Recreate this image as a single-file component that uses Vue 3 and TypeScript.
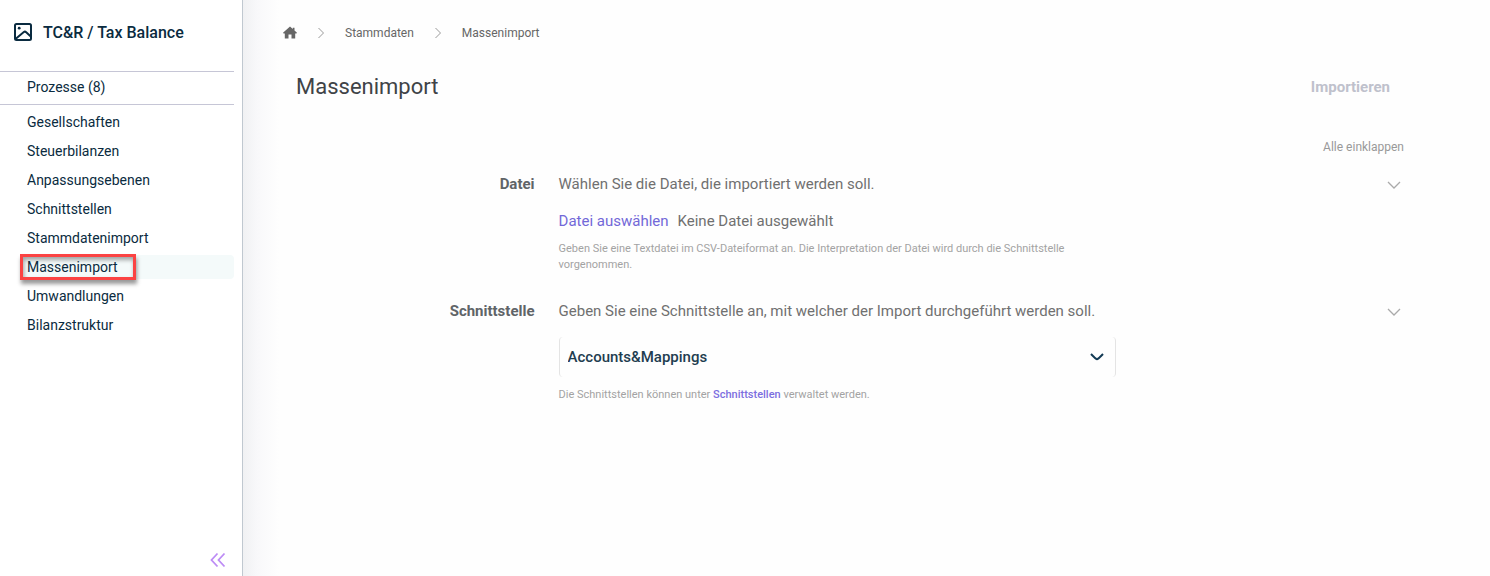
<script setup lang="ts">
import { ref } from 'vue'

interface NavItem {
  label: string
  active?: boolean
}

const items: NavItem[] = [
  { label: 'Gesellschaften' },
  { label: 'Steuerbilanzen' },
  { label: 'Anpassungsebenen' },
  { label: 'Schnittstellen' },
  { label: 'Stammdatenimport' },
  { label: 'Massenimport', active: true },
  { label: 'Umwandlungen' },
  { label: 'Bilanzstruktur' },
]

const fileName = ref('Keine Datei ausgewählt')
const selected = ref('Accounts&Mappings')

function onFile(event: Event): void {
  const input = event.target as HTMLInputElement
  fileName.value = input.files?.[0]?.name ?? 'Keine Datei ausgewählt'
}
</script>

<template>
  <div class="page">
    <aside class="sidebar">
      <header class="brand">
        <svg class="brand-icon" viewBox="0 0 20 20" fill="none" stroke="currentColor" stroke-width="2" aria-hidden="true">
          <rect x="2" y="2" width="16" height="16" rx="1.5" />
          <path d="M2.5 17 L10.8 10 Q12 9.2 13.2 10.2 L17.8 14.4" />
          <circle cx="6.2" cy="6.2" r="1.4" fill="currentColor" stroke="none" />
        </svg>
        <span>TC&amp;R / Tax Balance</span>
      </header>
      <nav class="nav">
        <div class="process"><a href="#">Prozesse (8)</a></div>
        <ul>
          <li v-for="item in items" :key="item.label" :class="{ active: item.active }">
            <a href="#" :aria-current="item.active ? 'page' : undefined">{{ item.label }}</a>
          </li>
        </ul>
      </nav>
      <button class="collapse" type="button" aria-label="Navigation einklappen">
        <svg viewBox="0 0 16 16" fill="none" stroke="currentColor" stroke-width="1.8" aria-hidden="true">
          <path d="M7.5 1.5 L1.5 8 L7.5 14.5 M14.5 1.5 L8.5 8 L14.5 14.5" />
        </svg>
      </button>
    </aside>

    <main class="main">
      <nav class="crumbs" aria-label="Brotkrumen">
        <a href="#" class="home" aria-label="Startseite">
          <svg viewBox="0 0 14 14" fill="currentColor" aria-hidden="true">
            <path d="M7 0.5 L9.8 3 V1.8 H11.5 V4.5 L14 6.8 L13.4 7.6 H12.2 V12.4 H8.5 V8.6 H5.5 V12.4 H1.8 V7.6 H0.6 L0 6.8 Z" />
          </svg>
        </a>
        <svg class="sep" viewBox="0 0 6 12" fill="none" stroke="currentColor" aria-hidden="true"><path d="M0.5 1 L5.5 6 L0.5 11" /></svg>
        <a href="#">Stammdaten</a>
        <svg class="sep" viewBox="0 0 6 12" fill="none" stroke="currentColor" aria-hidden="true"><path d="M0.5 1 L5.5 6 L0.5 11" /></svg>
        <a href="#">Massenimport</a>
      </nav>

      <div class="heading">
        <h1>Massenimport</h1>
        <button type="button" class="import" disabled>Importieren</button>
      </div>

      <div class="tools"><button type="button">Alle einklappen</button></div>

      <section class="row">
        <h2>Datei</h2>
        <div>
          <p class="lead">Wählen Sie die Datei, die importiert werden soll.</p>
          <div class="file">
            <input id="file" type="file" accept=".csv" @change="onFile" />
            <label for="file">Datei auswählen</label>
            <span>{{ fileName }}</span>
          </div>
          <p class="hint">Geben Sie eine Textdatei im CSV-Dateiformat an. Die Interpretation der Datei wird durch die Schnittstelle vorgenommen.</p>
        </div>
        <button type="button" class="toggle" aria-label="Datei einklappen">
          <svg viewBox="0 0 14 8" fill="none" stroke="currentColor" stroke-width="1.3" aria-hidden="true"><path d="M1 1 L7 7 L13 1" /></svg>
        </button>
      </section>

      <section class="row">
        <h2><label for="interface">Schnittstelle</label></h2>
        <div>
          <p class="lead">Geben Sie eine Schnittstelle an, mit welcher der Import durchgeführt werden soll.</p>
          <div class="select">
            <select id="interface" v-model="selected">
              <option>Accounts&amp;Mappings</option>
            </select>
            <svg viewBox="0 0 14 8" fill="none" stroke="currentColor" stroke-width="2" aria-hidden="true"><path d="M1 1 Q6 6.2 7 6.2 Q8 6.2 13 1" /></svg>
          </div>
          <p class="hint">Die Schnittstellen können unter <a href="#">Schnittstellen</a> verwaltet werden.</p>
        </div>
        <button type="button" class="toggle" aria-label="Schnittstelle einklappen">
          <svg viewBox="0 0 14 8" fill="none" stroke="currentColor" stroke-width="1.3" aria-hidden="true"><path d="M1 1 L7 7 L13 1" /></svg>
        </button>
      </section>
    </main>
  </div>
</template>

<style>
body {
  margin: 0;
}
</style>

<style scoped>
.page {
  display: flex;
  min-height: 100vh;
  font-family: Roboto, "Liberation Sans", sans-serif;
  background: #fefefe;
}

.page * {
  box-sizing: border-box;
}

a {
  color: inherit;
  text-decoration: none;
}

button {
  border: 0;
  padding: 0;
  background: none;
  font-family: inherit;
}

svg {
  display: block;
}

.sidebar {
  display: flex;
  flex-direction: column;
  flex: 0 0 243px;
  padding-right: 8px;
  border-right: 1px solid #c0c8d0;
  background: #fff;
  color: #0a2b40;
}

.brand {
  display: flex;
  align-items: center;
  gap: 10px;
  height: 71px;
  padding: 0 0 7px 13px;
  font-size: 16px;
  font-weight: 500;
}

.brand-icon {
  width: 20px;
  height: 20px;
}

.nav {
  font-size: 14px;
  line-height: 24px;
}

.process {
  padding: 3px 0 5px 27px;
  border-top: 1px solid #c6c6d6;
  border-bottom: 1px solid #c6c6d6;
}

ul {
  display: flex;
  flex-direction: column;
  gap: 5px;
  margin: 0;
  padding: 5px 0 0 20px;
  list-style: none;
}

li {
  display: flex;
  border-radius: 4px;
}

li a {
  padding-left: 7px;
}

li.active {
  background: #f4fafa;
}

li.active a {
  margin: -1px 0;
  padding: 0 15px 0 4px;
  border: 3px solid #fb4343;
  line-height: 20px;
  box-shadow: 1px 4px 4px rgba(0, 0, 0, 0.4), inset 1px 3px 4px rgba(0, 0, 0, 0.35);
}

.collapse {
  margin: auto 8px 8px auto;
  color: #bd8cf5;
}

.collapse svg {
  width: 16px;
  height: 16px;
}

.main {
  flex: 1;
  min-width: 0;
  padding: 24px 86px 24px 53px;
  background: linear-gradient(90deg, #f0f1f3 0, #f8f8fa 14px, #fefefe 36px);
}

.crumbs {
  display: flex;
  align-items: center;
  gap: 21px;
  height: 18px;
  margin-left: -13px;
  color: #666;
  font-size: 12px;
}

.home svg {
  width: 14px;
  height: 14px;
}

.sep {
  width: 6px;
  height: 12px;
  color: #999;
}

.heading {
  display: flex;
  align-items: center;
  justify-content: space-between;
  margin-top: 29px;
  padding-right: 14px;
}

h1 {
  margin: 0;
  color: #404347;
  font-size: 22px;
  font-weight: 400;
  line-height: 32px;
}

.import {
  color: #bfc1cc;
  font-size: 15px;
  font-weight: 700;
}

.tools {
  display: flex;
  justify-content: flex-end;
  margin: 34px 0 17px;
}

.tools button {
  color: #999;
  font-size: 12px;
  line-height: 20px;
}

.row {
  display: grid;
  grid-template-columns: 239fr 559fr 261fr;
  column-gap: 24px;
  align-items: start;
  margin-bottom: 28px;
  padding-right: 3px;
}

h2 {
  margin: 0;
  color: #606468;
  font-size: 15px;
  font-weight: 700;
  line-height: 20px;
  text-align: right;
}

p {
  margin: 0;
}

.lead {
  color: #707070;
  font-size: 15px;
  line-height: 20px;
}

.file {
  display: flex;
  gap: 9px;
  margin: 17px 0 10px;
  color: #707070;
  font-size: 15px;
  line-height: 20px;
}

.file input {
  position: absolute;
  width: 1px;
  height: 1px;
  opacity: 0;
}

.file label {
  color: #7268d8;
}

.hint {
  color: #a3a3a3;
  font-size: 11px;
  line-height: 16px;
}

.hint a {
  color: #7c6ee0;
  font-weight: 500;
}

.select {
  display: grid;
  align-items: center;
  margin: 16px 0 10px;
}

.select > * {
  grid-area: 1 / 1;
}

.select select {
  width: 100%;
  height: 40px;
  padding: 0 8px;
  border: 1px solid #e4e4e4;
  border-width: 0 1px;
  border-radius: 4px;
  appearance: none;
  background: transparent;
  color: #1f3d50;
  font: 500 15px Roboto, "Liberation Sans", sans-serif;
}

.select svg {
  width: 14px;
  height: 8px;
  margin-right: 12px;
  justify-self: end;
  color: #123a54;
  pointer-events: none;
}

.toggle {
  justify-self: end;
  padding-top: 7px;
  color: #aaa;
}

.toggle svg {
  width: 14px;
  height: 8px;
}
</style>
